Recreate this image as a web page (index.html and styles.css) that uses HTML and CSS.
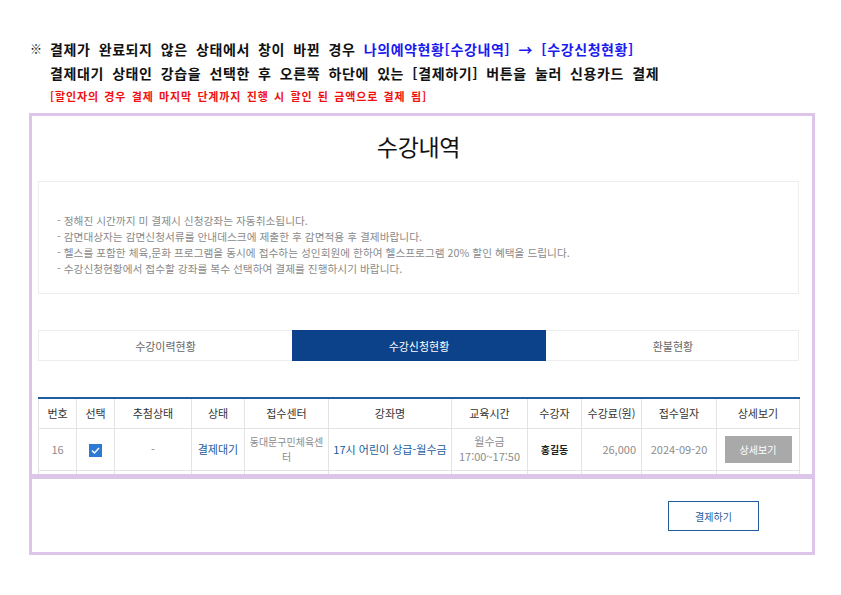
FILE: index.html
```html
<!DOCTYPE html>
<html lang="ko">
<head>
<meta charset="utf-8">
<title>수강내역</title>
<link rel="stylesheet" href="styles.css">
</head>
<body>
<div class="guide">
  <p class="g-line"><span class="mark">※</span>결제가 완료되지 않은 상태에서 창이 바뀐 경우 <span class="blue">나의예약현황[수강내역] → [수강신청현황]</span></p>
  <p class="g-line">결제대기 상태인 강습을 선택한 후 오른쪽 하단에 있는 [결제하기] 버튼을 눌러 신용카드 결제</p>
  <p class="g-red">[할인자의 경우 결제 마지막 단계까지 진행 시 할인 된 금액으로 결제 됨]</p>
</div>

<div class="frame frame-top">
  <h1 class="title">수강내역</h1>
  <div class="notice">
    <p>- 정해진 시간까지 미 결제시 신청강좌는 자동취소됩니다.</p>
    <p>- 감면대상자는 감면신청서류를 안내데스크에 제출한 후 감면적용 후 결제바랍니다.</p>
    <p>- 헬스를 포함한 체육,문화 프로그램을 동시에 접수하는 성인회원에 한하여 헬스프로그램 20% 할인 혜택을 드립니다.</p>
    <p>- 수강신청현황에서 접수할 강좌를 복수 선택하여 결제를 진행하시기 바랍니다.</p>
  </div>
  <div class="tabs">
    <div class="tab">수강이력현황</div>
    <div class="tab active">수강신청현황</div>
    <div class="tab">환불현황</div>
  </div>
  <table class="list">
    <colgroup>
      <col class="c1"><col class="c2"><col class="c3"><col class="c4"><col class="c5"><col class="c6"><col class="c7"><col class="c8"><col class="c9"><col class="c10"><col class="c11">
    </colgroup>
    <thead>
      <tr><th>번호</th><th>선택</th><th>추첨상태</th><th>상태</th><th>접수센터</th><th>강좌명</th><th>교육시간</th><th>수강자</th><th>수강료(원)</th><th>접수일자</th><th>상세보기</th></tr>
    </thead>
    <tbody>
      <tr>
        <td class="gray">16</td>
        <td><span class="check"><svg width="11" height="11" viewBox="0 0 11 11"><path d="M2 5.6 L4.4 8 L9 3" fill="none" stroke="#fff" stroke-width="1.4"/></svg></span></td>
        <td class="gray">-</td>
        <td class="link">결제대기</td>
        <td class="gray wrap">동대문구민체육센터</td>
        <td class="link">17시 어린이 상급-월수금</td>
        <td class="gray">월수금<br>17:00~17:50</td>
        <td class="name">홍길동</td>
        <td class="gray right">26,000</td>
        <td class="gray">2024-09-20</td>
        <td><span class="detail-btn">상세보기</span></td>
      </tr>
      <tr class="next"><td></td><td></td><td></td><td></td><td></td><td></td><td></td><td></td><td></td><td></td><td></td></tr>
    </tbody>
  </table>
</div>

<div class="frame frame-bottom">
  <div class="actions">
    <span class="pay-btn">결제하기</span>
  </div>
</div>
</body>
</html>
```

FILE: styles.css
```css
* { box-sizing: border-box; }
html, body { margin: 0; padding: 0; background: #fff; }
body {
  font-family: "Noto Sans CJK KR", "Noto Sans", sans-serif;
  color: #222;
  width: 841px;
  height: 595px;
  overflow: hidden;
}
p { margin: 0; }

.guide {
  padding: 37px 0 0 33px;
  height: 113px;
}
.g-line {
  font-size: 14px;
  font-weight: 700;
  line-height: 24px;
  letter-spacing: 0.6px;
  word-spacing: 3.7px;
  color: #111;
  padding-left: 17px;
  position: relative;
}
.mark {
  position: absolute;
  left: -3px;
  top: 0;
  font-size: 12px;
  font-weight: 700;
  letter-spacing: 0;
}
.blue { color: #1a1aef; }
.g-red {
  font-size: 11px;
  font-weight: 700;
  color: #f01010;
  line-height: 20px;
  letter-spacing: 0.85px;
  word-spacing: 1.5px;
  padding-left: 17px;
  margin-top: 1px;
}

.frame {
  margin-left: 29px;
  width: 786px;
  border: 3px solid #dcc5e8;
  padding: 0 13px 0 6px;
}
.frame-top {
  height: 364px;
  overflow: hidden;
}
.frame-bottom {
  border-top-width: 2px;
  height: 78px;
}

.title {
  margin: 15px 0 0;
  font-size: 23px;
  font-weight: 400;
  line-height: 30px;
  text-align: center;
  color: #111;
  letter-spacing: -0.3px;
}

.notice {
  margin-top: 20px;
  height: 113px;
  border: 1px solid #eeeeee;
  padding: 31px 0 0 18px;
}
.notice p {
  font-size: 10.7px;
  line-height: 16px;
  color: #8a8a8a;
}

.tabs {
  margin-top: 36px;
  display: grid;
  grid-template-columns: 253px 254px 254px;
  height: 31px;
  border: 1px solid #ededed;
}
.tab {
  display: flex;
  align-items: center;
  justify-content: center;
  font-size: 11px;
  color: #666;
}
.tab.active {
  background: #0b428a;
  color: #fff;
  margin: -1px 0;
}

.list {
  margin-top: 36px;
  width: 761px;
  table-layout: fixed;
  border-collapse: collapse;
  border-top: 2px solid #1f5d9e;
}
.c1 { width: 38px; }
.c2 { width: 38px; }
.c3 { width: 77px; }
.c4 { width: 53px; }
.c5 { width: 84px; }
.c6 { width: 123px; }
.c7 { width: 76px; }
.c8 { width: 54px; }
.c9 { width: 60px; }
.c10 { width: 75px; }
.c11 { width: 83px; }
.list th, .list td {
  border: 1px solid #e3e3e3;
  text-align: center;
  padding: 0 2px;
}
.list th {
  height: 30px;
  font-size: 11px;
  font-weight: 400;
  color: #333;
  border-top: 0;
}
.list td {
  height: 42px;
  font-size: 11px;
  line-height: 15px;
  color: #333;
}
.list td.gray { color: #8c8c8c; }
.list td.link { color: #1d5c9c; }
.list td.right { text-align: right; padding-right: 5px; }
.list td.name { font-size: 10px; font-weight: 700; color: #222; }
.list td.wrap { font-size: 10px; padding: 0 3px; word-break: break-all; }
.list tr.next td { height: 20px; }

.check {
  display: inline-flex;
  align-items: center;
  justify-content: center;
  width: 13px;
  height: 13px;
  background: #2b7bd6;
  vertical-align: middle;
}
.detail-btn {
  display: inline-flex;
  align-items: center;
  justify-content: center;
  width: 67px;
  height: 27px;
  background: #a9a9a9;
  color: #fff;
  font-size: 10px;
}

.actions {
  display: flex;
  justify-content: flex-end;
  padding: 22px 40px 0 0;
}
.pay-btn {
  display: flex;
  align-items: center;
  justify-content: center;
  width: 91px;
  height: 30px;
  border: 1.5px solid #1e5c9c;
  color: #1e5c9c;
  font-size: 10px;
}
```
